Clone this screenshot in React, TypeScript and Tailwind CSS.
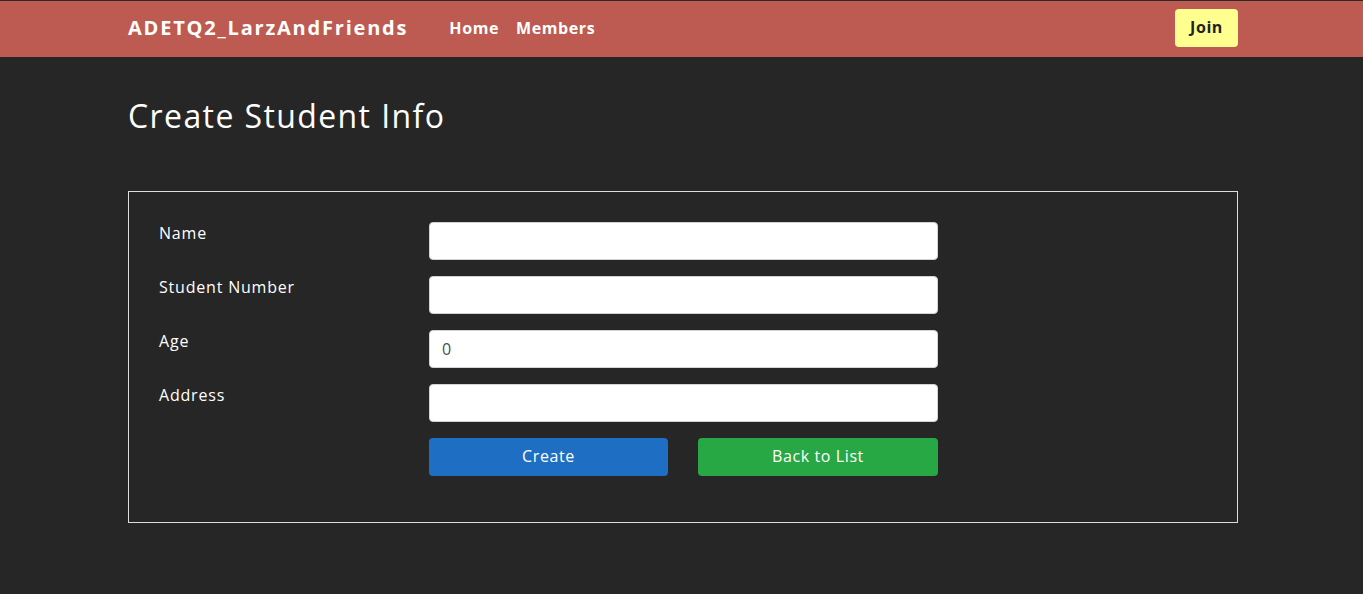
import React from 'react'

const fields = [
  { label: 'Name', value: '' },
  { label: 'Student Number', value: '' },
  { label: 'Age', value: '0' },
  { label: 'Address', value: '' },
]

function Navbar() {
  return (
    <nav className="h-[57px] border-t border-[#2a2a2a] bg-[#bd5b52]">
      <div className="ml-[128px] flex h-full w-[1110px] items-center pb-[2px]">
        <span className="text-[20px] font-bold tracking-[1.8px] text-white">ADETQ2_LarzAndFriends</span>
        <div className="ml-[41px] flex gap-[17px] text-[16px] font-bold tracking-[0.6px] text-white">
          <span>Home</span>
          <span>Members</span>
        </div>
        <button className="ml-auto h-[38px] w-[63px] rounded-[4px] bg-[#ffff8f] pb-[2px] text-[16px] font-bold tracking-[0.6px] text-[#222]">
          Join
        </button>
      </div>
    </nav>
  )
}

export default function App() {
  return (
    <div
      className="min-h-[594px] bg-[#262626] text-white"
      style={{ fontFamily: '"Open Sans", "Liberation Sans", sans-serif' }}
    >
      <Navbar />
      <main className="ml-[128px] w-[1110px]">
        <h1 className="mt-[39px] text-[32px] leading-[40px] tracking-[1.4px] text-white">Create Student Info</h1>

        <div className="mt-[55px] h-[332px] border border-[#dddddd] px-[30px] pt-[30px]">
          <div className="flex flex-col gap-[16px]">
            {fields.map((f) => (
              <div key={f.label} className="flex">
                <label className="w-[270px] pt-[1px] text-[16px] leading-[20px] tracking-[0.8px]">{f.label}</label>
                <input
                  defaultValue={f.value}
                  className="h-[38px] w-[509px] rounded-[4px] border border-[#ced4da] bg-white px-[12px] text-[16px] text-[#495057] outline-none"
                />
              </div>
            ))}
            <div className="ml-[270px] flex gap-[30px]">
              <button className="h-[38px] w-[239px] rounded-[4px] bg-[#1e6fc4] pb-[2px] text-[16px] tracking-[0.6px] text-white">Create</button>
              <button className="h-[38px] w-[240px] rounded-[4px] bg-[#28a745] pb-[2px] text-[16px] tracking-[0.6px] text-white">Back to List</button>
            </div>
          </div>
        </div>
      </main>
    </div>
  )
}
